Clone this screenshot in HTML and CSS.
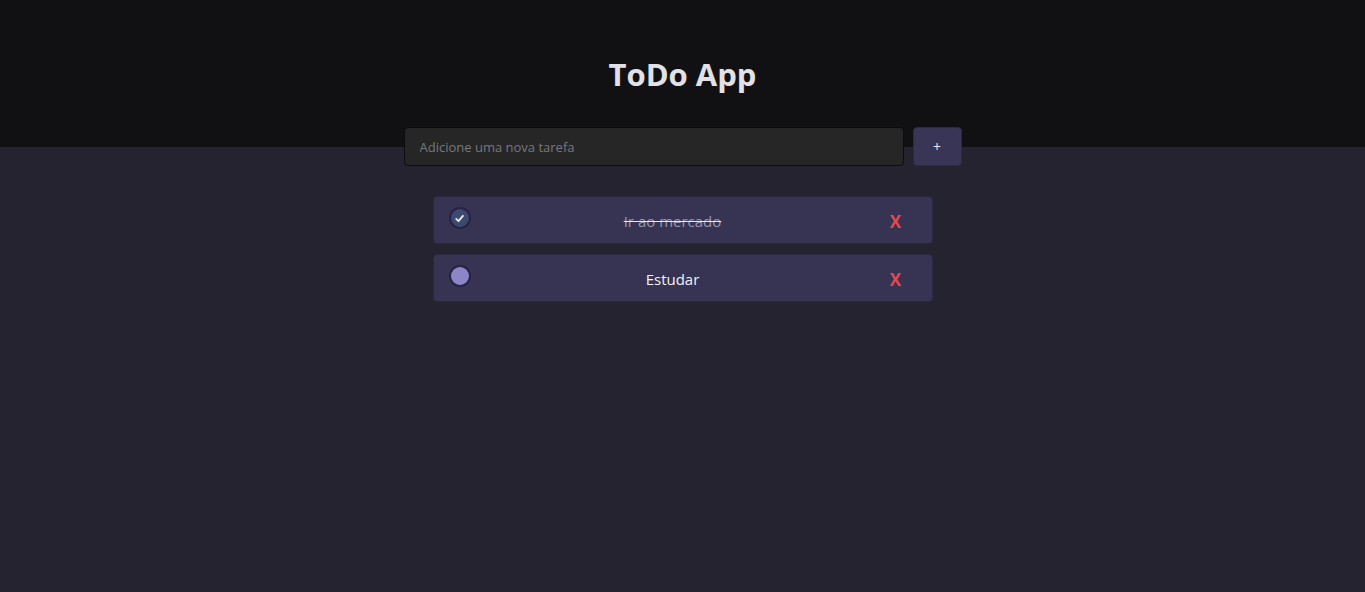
FILE: index.html
```html
<!DOCTYPE html>
<html lang="pt-BR">
<head>
<meta charset="utf-8">
<title>ToDo App</title>
<link rel="stylesheet" href="styles.css">
</head>
<body>
<header class="header">
  <h1 class="title">ToDo App</h1>
</header>
<main class="main">
  <form class="new-task">
    <input class="new-task-input" type="text" placeholder="Adicione uma nova tarefa">
    <button class="new-task-btn" type="button">+</button>
  </form>
  <ul class="tasks">
    <li class="task done">
      <span class="check checked">
        <svg viewBox="0 0 10 10" width="11" height="11"><path d="M2 5.4 L4.1 7.4 L8.1 2.6" fill="none" stroke="#e8e8f0" stroke-width="1.7" stroke-linecap="round" stroke-linejoin="round"/></svg>
      </span>
      <span class="task-text">Ir ao mercado</span>
      <button class="delete" type="button">X</button>
    </li>
    <li class="task">
      <span class="check"></span>
      <span class="task-text">Estudar</span>
      <button class="delete" type="button">X</button>
    </li>
  </ul>
</main>
</body>
</html>
```
FILE: styles.css
```css
* { box-sizing: border-box; }
html, body { margin: 0; padding: 0; }
body {
  background: #262330;
  font-family: "Open Sans", "Noto Sans", sans-serif;
  min-height: 592px;
}
.header {
  background: #111113;
  height: 147px;
  display: flex;
  justify-content: center;
  padding-top: 52px;
}
.title {
  margin: 0;
  color: #e1e1e6;
  font-size: 31px;
  font-weight: 700;
  line-height: 44px;
}
.main {
  display: flex;
  flex-direction: column;
  align-items: center;
}
.new-task {
  display: flex;
  gap: 9px;
  margin-top: -20px;
}
.new-task-input {
  width: 500px;
  height: 39px;
  background: #262626;
  border: 1px solid #0c0c0d;
  border-radius: 4px;
  padding: 0 15px;
  color: #ddd;
  font-family: inherit;
  font-size: 13px;
  outline: none;
}
.new-task-input::placeholder { color: #77777f; }
.new-task-btn {
  width: 49px;
  height: 39px;
  background: #393556;
  border: 1px solid #2c2944;
  border-radius: 4px;
  color: #e8e8f0;
  font-family: inherit;
  font-size: 14px;
  padding: 0;
}
.tasks {
  list-style: none;
  margin: 30px 0 0;
  padding: 0;
  display: flex;
  flex-direction: column;
  gap: 10px;
}
.task {
  width: 500px;
  height: 48px;
  background: #373352;
  border: 1px solid #2a2740;
  border-radius: 4px;
  display: flex;
  align-items: center;
  padding: 0 15px;
}
.check {
  width: 22px;
  height: 22px;
  border-radius: 50%;
  background: #8c86c8;
  border: 2px solid #262345;
  flex: none;
  display: flex;
  align-items: center;
  justify-content: center;
  margin-top: -4px;
}
.check.checked { background: #3b4a6e; }
.task-text {
  flex: 1;
  text-align: center;
  color: #f2f2f7;
  font-size: 15px;
  padding-top: 2px;
}
.done .task-text {
  color: #9a98ab;
  text-decoration: line-through;
  text-decoration-color: #e8e8ee;
}
.delete {
  width: 42px;
  background: none;
  border: none;
  padding: 2px 0 0;
  color: #e5484d;
  font-family: inherit;
  font-weight: 700;
  font-size: 17px;
}
```
